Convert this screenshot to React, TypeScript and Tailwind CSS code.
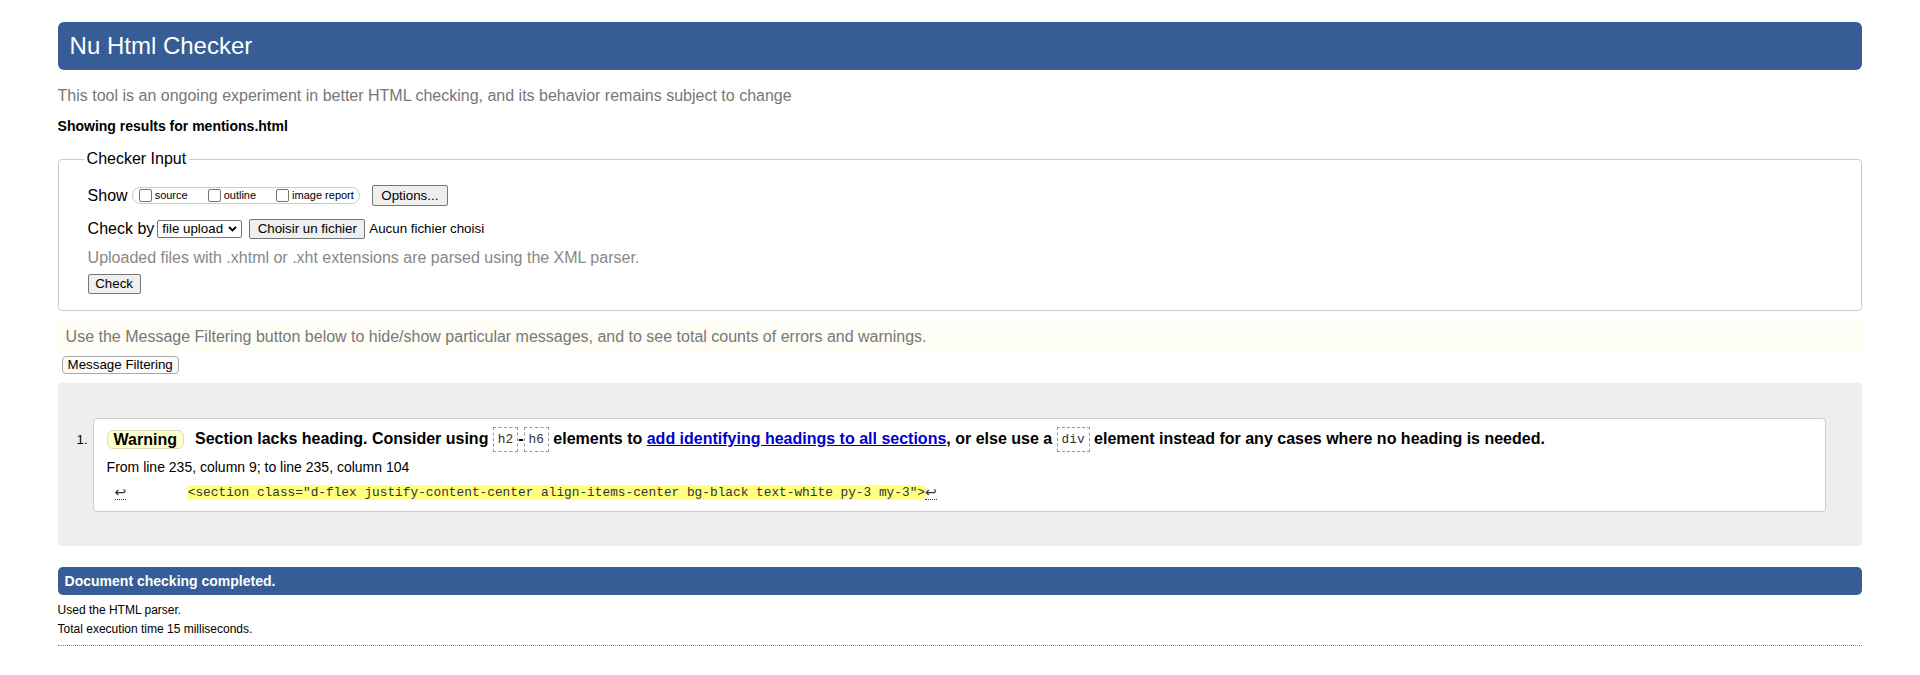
const Code = ({ children }: { children: string }) => (
  <code className="inline-block border border-dashed border-[#999] px-[4px] py-[4px] font-['Liberation_Mono','DejaVu_Sans_Mono',monospace] text-[12.8px] leading-[15px] font-normal text-[#333] align-middle">
    {children}
  </code>
);

const NativeButton = ({ label, className = "" }: { label: string; className?: string }) => (
  <button className={`flex items-center justify-center border border-[#767676] rounded-[2px] bg-[#efefef] px-[6px] text-[13.33px] text-black ${className}`}>
    {label}
  </button>
);

const Box = ({ label, className = "" }: { label: string; className?: string }) => (
  <label className={`flex items-center ${className}`}>
    <span className="w-[13px] h-[13px] border border-[#767676] rounded-[2px] bg-white"></span>
    <span className="ml-[3px] text-[11px] leading-[13px]">{label}</span>
  </label>
);

const Return = () => (
  <span className="inline-block border-b border-dotted border-[#333] font-['DejaVu_Sans',sans-serif] text-[14px] leading-[14px] text-[#333]">↩</span>
);

const App = () => {
  return (
    <div className="min-h-[675px] bg-white px-[3%] pb-[20px] pt-[22px] font-['Liberation_Sans',Arial,sans-serif] text-black">
      <header className="flex h-[48px] items-center rounded-[6px] bg-[#365d95] pl-[12px]">
        <h1 className="text-[24px] font-normal text-white">Nu Html Checker</h1>
      </header>

      <p className="mt-[17px] text-[16px] leading-[18px] text-[#777]">
        This tool is an ongoing experiment in better HTML checking, and its behavior remains subject to change
      </p>
      <p className="mt-[13px] text-[14px] leading-[16px] font-bold">Showing results for mentions.html</p>

      <fieldset className="mt-[16px] rounded-[4px] border border-[#ccc] pl-[25px] pb-[16px]">
        <legend className="px-[3px] text-[16px] leading-[18px]">Checker Input</legend>
        <div className="ml-[4px] mt-[17px] flex flex-col">
          <div className="flex h-[21px] items-center">
            <span className="text-[16px]">Show</span>
            <div className="ml-[4px] flex h-[17px] items-center rounded-[8px] border border-[#ccc] pl-[6px] pr-[5px]">
              <Box label="source" />
              <Box label="outline" className="ml-[20px]" />
              <Box label="image report" className="ml-[20px]" />
            </div>
            <NativeButton label="Options..." className="ml-[12px] h-[21px] w-[76px]" />
          </div>

          <div className="mt-[13px] flex h-[20px] items-center">
            <span className="text-[16px]">Check by</span>
            <div className="ml-[3px] flex h-[18px] w-[85px] items-center justify-between rounded-[2px] border border-[#767676] bg-white pl-[4px] pr-[4px] text-[13.33px]">
              <span>file upload</span>
              <svg width="9" height="6" viewBox="0 0 9 6" fill="none" stroke="#000" strokeWidth="1.8">
                <path d="M1 1l3.5 3.5L8 1" />
              </svg>
            </div>
            <NativeButton label="Choisir un fichier" className="ml-[7px] h-[20px] w-[116px]" />
            <span className="ml-[4px] text-[13.33px]">Aucun fichier choisi</span>
          </div>

          <p className="mt-[10px] text-[16px] leading-[18px] text-[#888]">
            Uploaded files with .xhtml or .xht extensions are parsed using the XML parser.
          </p>

          <NativeButton label="Check" className="mt-[7px] h-[20px] w-[53px]" />
        </div>
      </fieldset>

      <div className="mt-[10px] bg-[#fffef6] pb-[5px] pl-[8px] pt-[7px]">
        <p className="text-[16px] leading-[18px] text-[#777]">
          Use the Message Filtering button below to hide/show particular messages, and to see total counts of errors and warnings.
        </p>
      </div>
      <button className="ml-[4px] mt-[5px] flex h-[18px] items-center rounded-[4px] border border-[#aaa] bg-[#fbfbfb] px-[5px] text-[13.33px]">
        Message Filtering
      </button>

      <div className="mt-[9px] flex items-start rounded-[4px] bg-[#eeeeee] pb-[34px] pl-[19px] pr-[36px] pt-[35px]">
        <span className="mt-[14px] w-[16px] text-[13.33px] leading-[16px]">1.</span>
        <div className="flex-1 rounded-[4px] border border-[#ccc] bg-white pb-[11px] pl-[13px] pt-[8px]">
          <div className="flex h-[25px] items-center text-[16px] font-bold leading-[18px]">
            <span className="flex h-[19px] items-center rounded-[6px] border border-[#dedbb8] bg-[#ffffcc] px-[6px]">Warning</span>
            <p className="ml-[11px] whitespace-pre">
              {"Section lacks heading. Consider using "}
              <Code>h2</Code>
              {"-"}
              <Code>h6</Code>
              {" elements to "}
              <a href="#" className="text-[#0000cc] underline">add identifying headings to all sections</a>
              {", or else use a "}
              <Code>div</Code>
              {" element instead for any cases where no heading is needed."}
            </p>
          </div>
          <p className="mt-[7px] text-[14px] leading-[16px]">From line 235, column 9; to line 235, column 104</p>
          <p className="ml-[8px] mt-[10px] flex items-end whitespace-pre font-['Liberation_Mono','DejaVu_Sans_Mono',monospace] text-[12.8px] leading-[15px] text-[#333]">
            <Return />
            <span>{"        "}</span>
            <span className="bg-[#ffff80]">{'<section class="d-flex justify-content-center align-items-center bg-black text-white py-3 my-3">'}</span>
            <Return />
          </p>
        </div>
      </div>

      <div className="mt-[21px] flex h-[28px] items-center rounded-[5px] bg-[#365d95] pl-[7px] text-[14px] font-bold text-white">
        Document checking completed.
      </div>
      <p className="mt-[8px] text-[12px] leading-[14px]">Used the HTML parser.</p>
      <p className="mt-[5px] text-[12px] leading-[14px]">Total execution time 15 milliseconds.</p>
      <div className="mt-[9px] border-t border-dotted border-[#888]"></div>
    </div>
  );
};

export default App;
